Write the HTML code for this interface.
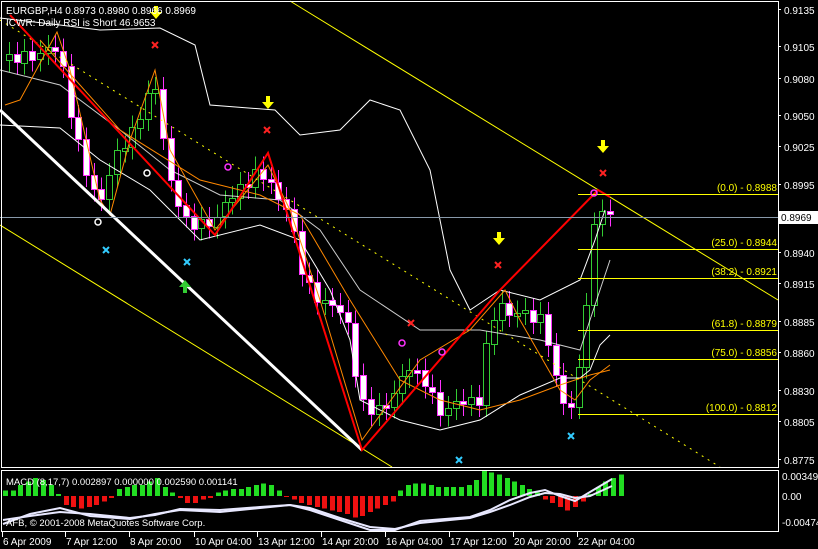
<!DOCTYPE html>
<html><head><meta charset="utf-8"><style>
html,body{margin:0;padding:0;background:#000;width:818px;height:549px;overflow:hidden}
svg{display:block}
text{font-family:"Liberation Sans",sans-serif;font-size:10px;fill:#fff}
</style></head><body>
<svg id="s" width="818" height="549" viewBox="0 0 818 549" xmlns="http://www.w3.org/2000/svg" shape-rendering="crispEdges">
<rect width="818" height="549" fill="#000"/>
<g id="cnd"></g>
<g fill="none" stroke="#fff" stroke-width="1" shape-rendering="auto">
<polyline points="0,18 60,25 100,30 160,28 195,45 210,105 275,110 300,135 340,130 370,100 400,110 430,170 450,270 470,310 500,290 540,300 580,280 595,240 605,210"/>
<polyline points="0,125 60,128 100,160 150,190 200,240 260,225 300,240 330,290 350,340 360,400 400,420 440,430 480,420 520,395 560,378 580,378 590,370 600,345 610,335"/>
<polyline points="0,70 60,85 120,130 170,170 220,195 280,200 320,230 360,290 420,330 480,330 540,340 580,350 600,290 610,260" stroke-opacity=".8"/>
</g>
<g fill="none" stroke="#f80" stroke-width="1" shape-rendering="auto">
<polyline points="5,105 20,100 57,32 70,70 100,200 110,215 130,140 155,70 170,150 215,230 268,165 290,210 320,300 362,440 420,360 470,330 505,290 520,320 560,390 575,400 590,380 610,365"/>
<polyline points="40,40 120,130 200,180 260,195 300,215 350,300 400,380 440,400 480,410 520,400 560,385 590,375 610,370"/>
</g>
<g stroke="#ff0" fill="none" shape-rendering="auto">
<line x1="290" y1="1" x2="778" y2="300"/>
<line x1="0" y1="225" x2="392" y2="467"/>
<line x1="0" y1="20" x2="720" y2="467" stroke-dasharray="2,5"/>
</g>
<line x1="0" y1="110" x2="362" y2="450" stroke="#fff" stroke-width="3" shape-rendering="auto"/>
<polyline points="10,15 215,235 268,153 362,450 500,290 598,190 610,197" fill="none" stroke="#f00" stroke-width="2" shape-rendering="auto"/>
<g stroke="#ff0">
<line x1="578" y1="194.5" x2="778" y2="194.5"/>
<line x1="578" y1="249.5" x2="778" y2="249.5"/>
<line x1="578" y1="278.5" x2="778" y2="278.5"/>
<line x1="578" y1="330.5" x2="778" y2="330.5"/>
<line x1="578" y1="359.5" x2="778" y2="359.5"/>
<line x1="578" y1="414.5" x2="778" y2="414.5"/>
</g>
<line x1="0" y1="217.5" x2="778" y2="217.5" stroke="#8899aa"/>
<g text-anchor="end">
<text x="777" y="191" style="fill:#ff0">(0.0) - 0.8988</text>
<text x="777" y="246" style="fill:#ff0">(25.0) - 0.8944</text>
<text x="777" y="275" style="fill:#ff0">(38.2) - 0.8921</text>
<text x="777" y="327" style="fill:#ff0">(61.8) - 0.8879</text>
<text x="777" y="356" style="fill:#ff0">(75.0) - 0.8856</text>
<text x="777" y="411" style="fill:#ff0">(100.0) - 0.8812</text>
</g>
<g id="mk"></g>
<g fill="none" stroke-width="1.5" shape-rendering="auto">
<circle cx="147" cy="173" r="3" stroke="#fff"/><circle cx="98" cy="222" r="3" stroke="#fff"/>
<circle cx="228" cy="167" r="3" stroke="#f3f"/><circle cx="402" cy="343" r="3" stroke="#f3f"/><circle cx="442" cy="352" r="3" stroke="#f3f"/><circle cx="594" cy="193" r="3" stroke="#f3f"/>
</g>
<rect x="1.5" y="1.5" width="777" height="466" fill="none" stroke="#fff"/>
<rect x="1.5" y="470.5" width="777" height="61" fill="none" stroke="#fff"/>
<g id="macd"></g>
<polyline points="3,524 30,514 60,508 90,516 130,519 155,514 180,510 220,512 260,508 290,505 310,510 340,520 370,530 395,530 420,521 470,517 490,510 510,500 530,493 545,490 560,496 575,501 590,492 612,479" fill="none" stroke="#e8e8ff" stroke-width="2" shape-rendering="auto"/>
<polyline points="3,520 30,516 60,512 90,514 130,518 155,515 180,509 220,510 260,507 290,505 310,508 340,518 370,527 395,529 420,523 470,518 490,512 510,505 530,497 545,493 560,494 575,498 590,496 612,486" fill="none" stroke="#e8e8ff" stroke-width="2" shape-rendering="auto"/>
<text x="6" y="14">EURGBP,H4 0.8973 0.8980 0.8966 0.8969</text>
<text x="6" y="26">ICWR: Daily RSI is Short 46.9653</text>
<text x="6" y="485" style="font-size:9.5px">MACD  (8,17,7) 0.002897 0.000000 0.002590 0.001141</text>
<text x="6" y="526" style="font-size:9.5px">AFB, © 2001-2008 MetaQuotes Software Corp.</text>
<g id="pax"></g>
<rect x="779" y="211" width="39" height="13" fill="#fff"/>
<text x="781" y="221" style="fill:#000">0.8969</text>
<g style="font-size:9.5px">
<text x="782" y="480">0.00349</text><text x="782" y="500">0.00</text><text x="782" y="526">-0.00474</text>
</g>
<g id="dax"></g>
</svg>
<script>
var NS="http://www.w3.org/2000/svg";
function el(p,t,a){var e=document.createElementNS(NS,t);for(var k in a)e.setAttribute(k,a[k]);p.appendChild(e);return e;}
var pts=[[5,60],[30,55],[60,50],[75,130],[90,180],[100,200],[120,150],[135,130],[155,75],[170,180],[185,220],[200,225],[215,220],[240,190],[260,170],[275,185],[290,215],[305,280],[320,300],[335,300],[350,330],[360,400],[370,410],[390,400],[410,370],[425,380],[440,410],[460,405],[480,400],[490,330],[500,300],[510,310],[525,315],[545,320],[555,370],[565,400],[575,410],[585,330],[595,230],[605,200],[612,215]];
function yAt(x){for(var i=1;i<pts.length;i++){if(x<=pts[i][0]){var a=pts[i-1],b=pts[i];return a[1]+(b[1]-a[1])*(x-a[0])/(b[0]-a[0]);}}return 215;}
(function(){
var g=document.getElementById('cnd');var prev=yAt(5);
for(var x=6;x<=612;x+=7.7){var c=yAt(x+4)+((Math.round(x)%3)-1)*5;var o=prev;var up=c<o;var tp=Math.min(o,c),bt=Math.max(o,c);if(bt-tp<3)bt=tp+3;var xx=Math.round(x);
el(g,'line',{x1:xx+3.5,y1:tp-12,x2:xx+3.5,y2:bt+12,stroke:up?'#3c3':'#f3f'});
el(g,'rect',{x:xx+0.5,y:Math.round(tp)+0.5,width:6,height:Math.round(bt-tp),fill:up?'#000':'#fff',stroke:up?'#3c3':'#f3f'});prev=c;}
var mk=document.getElementById('mk');
function arrow(x,y,col,down){var d=down?'M'+(x-2)+','+(y-8)+'h4v6h4l-6,7l-6,-7h4z':'M'+(x-2)+','+(y+8)+'h4v-6h4l-6,-7l-6,7h4z';el(mk,'path',{d:d,fill:col,'shape-rendering':'auto'});}
arrow(156,14,'#ff0',true);arrow(268,104,'#ff0',true);arrow(499,240,'#ff0',true);arrow(603,148,'#ff0',true);arrow(185,285,'#3c3',false);
function cross(x,y,col){el(mk,'path',{d:'M'+(x-3)+','+(y-3)+'L'+(x+3)+','+(y+3)+'M'+(x+3)+','+(y-3)+'L'+(x-3)+','+(y+3),stroke:col,'stroke-width':2,'shape-rendering':'auto'});}
cross(155,45,'#f22');cross(267,130,'#f22');cross(498,265,'#f22');cross(603,173,'#f22');cross(411,323,'#f22');
cross(106,250,'#3cf');cross(187,262,'#3cf');cross(459,460,'#3cf');cross(571,436,'#3cf');
var m=document.getElementById('macd');
var h=[3,3,6,8,10,9,6,1,-5,-6,-7,-6,-5,-3,-1,4,5,6,6,8,10,5,2,-1,-4,-4,-2,-1,2,3,4,4,5,6,7,6,3,0,-2,-4,-5,-6,-7,-8,-9,-10,-12,-11,-9,-7,-5,-3,3,6,7,7,6,5,5,5,5,6,9,14,13,12,10,8,6,4,2,-2,-4,-6,-8,-6,-3,1,5,8,10,12];
for(var i=0;i<h.length;i++){var v=h[i],x2=3+i*7.6;var y0=496;el(m,'rect',{x:Math.round(x2),y:v>0?y0-v*1.8:y0,width:5,height:Math.max(1,Math.abs(v)*1.8),fill:v>0?'#2d2':'#e11'});}
var pa=document.getElementById('pax');
[["0.9135",14],["0.9105",51],["0.9080",83],["0.9050",120],["0.9025",151],["0.8995",189],["0.8940",257],["0.8915",288],["0.8885",326],["0.8860",357],["0.8830",395],["0.8805",426],["0.8775",464]].forEach(function(a){var t=el(pa,'text',{x:784,y:a[1]});t.textContent=a[0];el(pa,'line',{x1:778,y1:a[1]-4.5,x2:781,y2:a[1]-4.5,stroke:'#fff'});});
var da=document.getElementById('dax');
[["6 Apr 2009",3],["7 Apr 12:00",66],["8 Apr 20:00",130],["10 Apr 04:00",195],["13 Apr 12:00",258],["14 Apr 20:00",322],["16 Apr 04:00",386],["17 Apr 12:00",450],["20 Apr 20:00",514],["22 Apr 04:00",578]].forEach(function(a){var t=el(da,'text',{x:a[1],y:545});t.textContent=a[0];el(da,'line',{x1:a[1]-0.5,y1:532,x2:a[1]-0.5,y2:537,stroke:'#fff'});});
})();
</script>
</body></html>
